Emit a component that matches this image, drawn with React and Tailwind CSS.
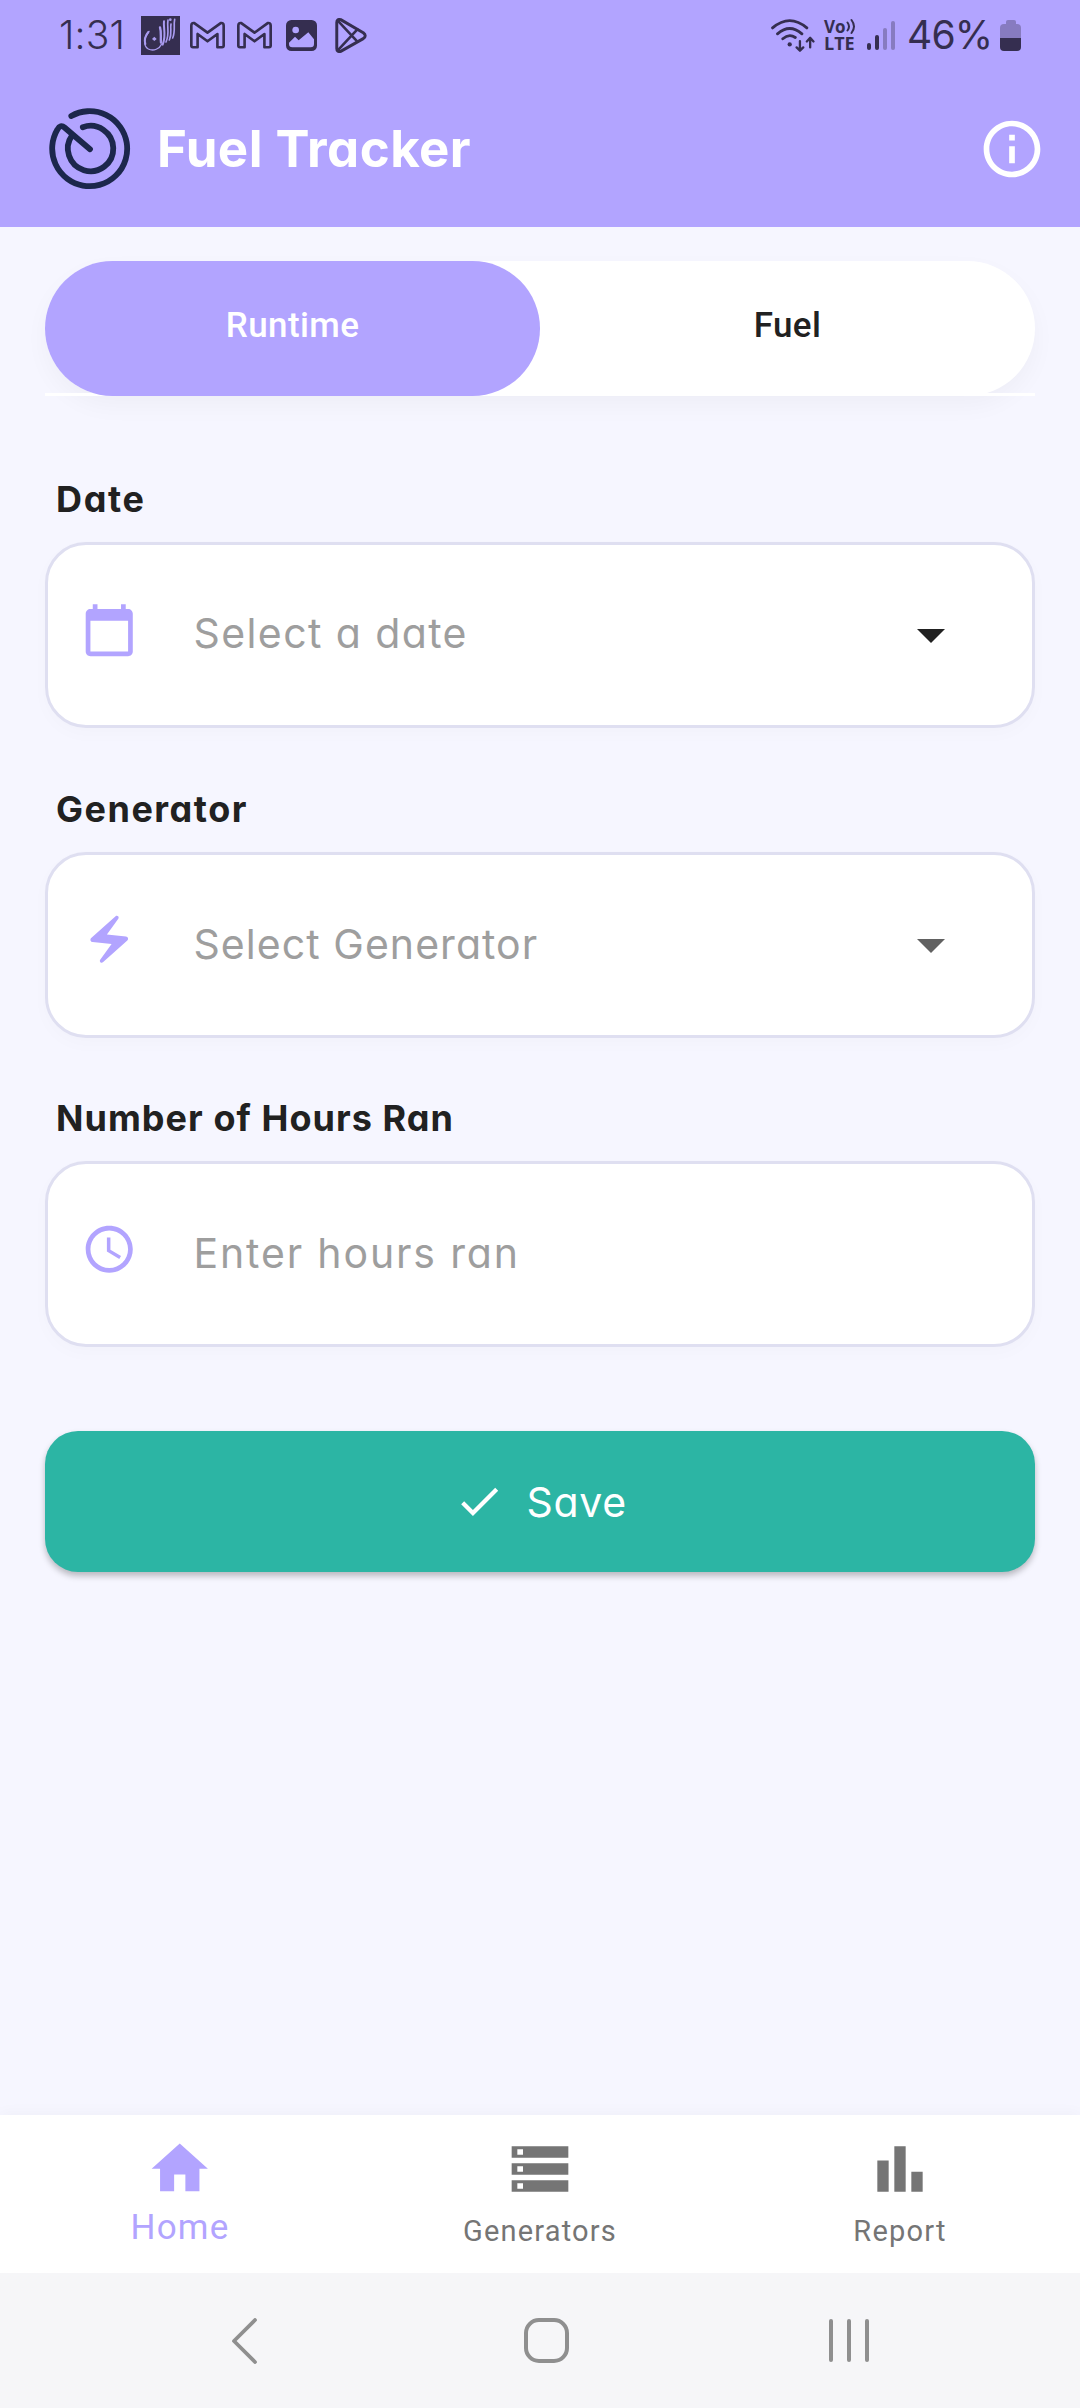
const INTER = "font-[Inter,sans-serif] [font-feature-settings:'cv11']";

function Icon({ d, className }) {
  return (
    <svg viewBox="0 0 24 24" fill="currentColor" className={className}>
      <path d={d} />
    </svg>
  );
}

const PATHS = {
  info: "M11 7h2v2h-2zm0 4h2v6h-2zm1-9C6.48 2 2 6.48 2 12s4.48 10 10 10 10-4.48 10-10S17.52 2 12 2zm0 18c-4.41 0-8-3.59-8-8s3.59-8 8-8 8 3.59 8 8-3.59 8-8 8z",
  calendar: "M20 3h-1V1h-2v2H7V1H5v2H4c-1.1 0-2 .9-2 2v16c0 1.1.9 2 2 2h16c1.1 0 2-.9 2-2V5c0-1.1-.9-2-2-2zm0 18H4V8h16v13z",
  bolt: "M14.69 2.21L4.33 11.49c-.64.58-.28 1.65.58 1.73L13 14l-4.85 6.76c-.22.31-.19.74.08 1.01.3.3.77.31 1.08.02l10.36-9.28c.64-.58.28-1.65-.58-1.73L11 10l4.85-6.76c.22-.31.19-.74-.08-1.01-.3-.3-.77-.31-1.08-.02z",
  clock: "M11.99 2C6.47 2 2 6.48 2 12s4.47 10 9.99 10C17.52 22 22 17.52 22 12S17.52 2 11.99 2zM12 20c-4.42 0-8-3.58-8-8s3.58-8 8-8 8 3.58 8 8-3.58 8-8 8zm.5-13H11v6l5.25 3.15.75-1.23-4.5-2.67z",
  check: "M9 16.17L4.83 12l-1.42 1.41L9 19 21 7l-1.41-1.41z",
  home: "M10 20v-6h4v6h5v-8h3L12 3 2 12h3v8z",
  storage: "M2 20h20v-4H2v4zm2-3h2v2H4v-2zM2 4v4h20V4H2zm4 3H4V5h2v2zm-4 7h20v-4H2v4zm2-3h2v2H4v-2z",
  chart: "M4 9h4v11H4zm12 4h4v7h-4zm-6-9h4v16h-4z",
};

function GmailIcon({ className }) {
  return (
    <svg viewBox="0 0 106 84" className={className} fill="none" stroke="currentColor" strokeWidth="8" strokeLinejoin="round">
      <path d="M4 14 Q4 4 13 6 L53 35 L93 6 Q102 4 102 14 V74 Q102 79 97 79 H83 V39 L53 61 L23 39 V79 H9 Q4 79 4 74 Z" />
    </svg>
  );
}

function StatusBar() {
  return (
    <div className="flex h-[70px] items-center pl-[59px] pr-[59px] text-[#352e50]">
      <span className="w-[82px] text-[39px] leading-[70px] font-[350] tracking-[0.2px] font-[Inter,sans-serif]">1:31</span>
      <svg viewBox="0 0 117 117" className="size-[39px]">
        <rect width="117" height="117" fill="#352e50" />
        <g fill="none" stroke="#a99bef" strokeLinecap="round">
          <path d="M24 46 C8 66 6 90 22 99 C38 107 56 98 62 84" strokeWidth="4" />
          <path d="M22 48 C12 60 10 74 13 84" strokeWidth="6" />
          <path d="M57 34 C62 50 58 60 60 80" strokeWidth="7" />
          <path d="M69 16 C66 36 77 56 65 86" strokeWidth="6" />
          <path d="M81 12 C77 34 87 52 75 78" strokeWidth="5" />
          <path d="M90 24 C87 40 94 52 85 72" strokeWidth="5" />
          <path d="M101 10 C97 30 104 46 95 66" strokeWidth="5" />
        </g>
        <path d="M33 69 L40 62 L47 69 L40 75 Z" fill="#a99bef" />
        <circle cx="88" cy="11" r="4" fill="#a99bef" />
      </svg>
      <GmailIcon className="ml-[10px] h-[28px] w-[35px]" />
      <GmailIcon className="ml-[12px] h-[28px] w-[35px]" />
      <svg viewBox="0 0 93 93" className="ml-[14px] size-[31px]">
        <rect width="93" height="93" rx="16" fill="currentColor" />
        <circle cx="29" cy="30" r="10" fill="#b2a4ff" />
        <path d="M9 68 L27 50 L38 61 L67 37 L84 58 V72 Q84 82 74 82 H19 Q9 82 9 72 Z" fill="#b2a4ff" />
      </svg>
      <svg viewBox="0 0 97 107" className="ml-[18px] h-[35px] w-[32px]" fill="none" stroke="currentColor" strokeWidth="9" strokeLinejoin="round" strokeLinecap="round">
        <path d="M5 14 Q5 2 17 5 L86 45 Q98 54 86 63 L17 102 Q5 105 5 93 Z" />
        <path d="M8 8 L68 72 M8 99 L68 35" strokeWidth="8" />
      </svg>

      <svg viewBox="0 0 132 100" className="ml-auto h-[33px] w-[44px]" fill="none" stroke="currentColor" strokeWidth="8.5" strokeLinecap="round" strokeLinejoin="round">
        <path d="M4 27 Q56 -17 108 27 M19 45 Q56 13 93 45 M35 60 Q54 43 73 56" />
        <circle cx="56" cy="77" r="6.5" fill="currentColor" stroke="none" />
        <path d="M87 67 V95 M77 86 L87 96 L97 86 M118 86 V58 M108 68 L118 57 L128 68" strokeWidth="7" />
      </svg>
      <div className="ml-[9px] flex w-[32px] flex-col font-['Open_Sans',sans-serif] font-bold leading-[17px]">
        <span className="flex h-[17px] items-center text-[17px]">
          Vo
          <svg viewBox="0 0 10 17" className="h-[17px] w-[10px]" fill="none" stroke="currentColor" strokeWidth="2" strokeLinecap="round">
            <path d="M1.5 4.5 Q4.5 8.5 1.5 12.5 M5.5 2 Q10.5 8.5 5.5 15" />
          </svg>
        </span>
        <span className="h-[17px] text-[18px]">LTE</span>
      </div>
      <div className="ml-[11px] flex h-[29px] items-end gap-[4px]">
        <i className="h-[7px] w-[4px] rounded-full bg-[#352e50]" />
        <i className="h-[15px] w-[4px] rounded-full bg-[#352e50]" />
        <i className="h-[22px] w-[4px] rounded-full bg-[#877bc0]" />
        <i className="h-[29px] w-[4px] rounded-full bg-[#877bc0]" />
      </div>
      <span className="ml-[12px] w-[93px] text-[39px] leading-[70px] tracking-[-0.8px] font-[Inter,sans-serif]">46%</span>
      <div className="flex w-[21px] flex-col items-center">
        <i className="h-[4px] w-[10px] rounded-t-[2px] bg-[#877bc0]" />
        <i className="h-[14px] w-full rounded-t-[4px] bg-[#877bc0]" />
        <i className="h-[13px] w-full rounded-b-[4px] bg-[#352e50]" />
      </div>
    </div>
  );
}

function Header() {
  return (
    <header className="flex h-[157px] items-center pl-[49px] pr-[34px] text-white">
      <svg viewBox="49 108 82 82" className="size-[82px]" fill="none" stroke="#1c274c" strokeWidth="5.8" strokeLinecap="round" strokeLinejoin="round">
        <path d="M71.3 116 A37.5 37.5 0 1 1 57.4 129.6 Q60.5 124 64.5 127.5 L90 149.2" />
        <path d="M82.8 127.2 A22.7 22.7 0 1 1 72.2 135.2" />
      </svg>
      <h1 className={`ml-[26px] text-[51px] leading-[60px] font-[650] tracking-[0.45px] ${INTER}`}>Fuel Tracker</h1>
      <Icon d={PATHS.info} className="ml-auto size-[68px]" />
    </header>
  );
}

function Field({ label, labelClass, icon, text, textClass, arrow }) {
  return (
    <section>
      <h2 className={`mb-[23px] pl-[11px] text-[36px] leading-[40px] font-bold text-[#212121] ${INTER} ${labelClass}`}>{label}</h2>
      <div className="flex h-[186px] items-center rounded-[41px] border-[3px] border-[#dfdff1] bg-white pl-[33px] pr-[87px] shadow-[0_6px_18px_rgba(0,0,0,0.02)]">
        <Icon d={icon} className="mb-[10px] size-[56.5px] text-[#b2a4ff]" />
        <span className={`ml-[56px] text-[41px] leading-[40px] text-[#9e9e9e] ${INTER} ${textClass}`}>{text}</span>
        {arrow && (
          <svg viewBox="0 0 28 14" className={`ml-auto mt-[2px] h-[14px] w-[28px] ${arrow}`} fill="currentColor">
            <path d="M0 0h28L14 14z" />
          </svg>
        )}
      </div>
    </section>
  );
}

export default function App() {
  return (
    <div className="flex h-[2408px] w-[1080px] flex-col overflow-hidden bg-[#f6f6ff] font-[Roboto,sans-serif]">
      <div className="h-[227px] bg-[#b2a4ff]">
        <StatusBar />
        <Header />
      </div>

      <main className="flex flex-1 flex-col px-[45px] pt-[34px]">
        <div className="relative h-[135px] rounded-[67.5px] bg-white shadow-[0_10px_24px_rgba(0,0,0,0.035)]">
          <div className="absolute inset-x-0 bottom-0 h-[3px] bg-white" />
          <div className="relative grid h-full grid-cols-2 text-center text-[35px] leading-[130px] font-medium tracking-[0.4px]">
            <div className="rounded-[67.5px] bg-[#b2a4ff] text-white">Runtime</div>
            <div className="text-[#212121]">Fuel</div>
          </div>
        </div>

        <div className="mt-[83px] flex flex-col gap-[60.5px]">
          <Field label="Date" labelClass="tracking-[1.7px]" icon={PATHS.calendar} text="Select a date" textClass="mb-[4px] tracking-[1.4px]" arrow="text-[#212121]" />
          <Field label="Generator" labelClass="tracking-[1.5px]" icon={PATHS.bolt} text="Select Generator" textClass="mb-[2px] tracking-[1.05px]" arrow="text-[#616161]" />
          <Field label="Number of Hours Ran" labelClass="tracking-[1.05px]" icon={PATHS.clock} text="Enter hours ran" textClass="mb-[2px] tracking-[1.85px]" />
        </div>

        <div className="mt-[84px] flex h-[141px] items-center rounded-[33px] bg-[#2cb5a4] pl-[409px] text-white shadow-[0_4px_6px_rgba(0,0,0,0.25)]">
          <Icon d={PATHS.check} className="size-[50.5px]" />
          <span className={`ml-[22px] text-[41px] leading-[40px] tracking-[0.7px] ${INTER}`}>Save</span>
        </div>
      </main>

      <nav className="grid h-[158px] grid-cols-3 bg-white pt-[20px] text-[29px] leading-[40px] tracking-[1.2px] text-[#757575] shadow-[0_-2px_14px_rgba(0,0,0,0.03)]">
        <div className="flex flex-col items-center text-[#b2a4ff]">
          <Icon d={PATHS.home} className="size-[67.5px]" />
          <span className="mt-[5px] text-[35px]">Home</span>
        </div>
        <div className="flex flex-col items-center">
          <Icon d={PATHS.storage} className="size-[68px]" />
          <span className="mt-[8px]">Generators</span>
        </div>
        <div className="flex flex-col items-center">
          <Icon d={PATHS.chart} className="size-[68px]" />
          <span className="mt-[8px]">Report</span>
        </div>
      </nav>

      <div className="flex h-[135px] items-center bg-[#f6f6f8] pl-[231px] text-[#8f8f8f]">
        <svg viewBox="0 0 27 46" className="h-[46px] w-[27px]" fill="none" stroke="currentColor" strokeWidth="3.8" strokeLinecap="round" strokeLinejoin="round">
          <path d="M24 2 L3 23 L24 44" />
        </svg>
        <div className="ml-[266px] h-[45px] w-[45px] rounded-[15px] border-4 border-[#8f8f8f]" />
        <div className="ml-[260px] flex gap-[14px]">
          <i className="h-[43px] w-[4px] rounded-full bg-[#8f8f8f]" />
          <i className="h-[43px] w-[4px] rounded-full bg-[#8f8f8f]" />
          <i className="h-[43px] w-[4px] rounded-full bg-[#8f8f8f]" />
        </div>
      </div>
    </div>
  );
}
